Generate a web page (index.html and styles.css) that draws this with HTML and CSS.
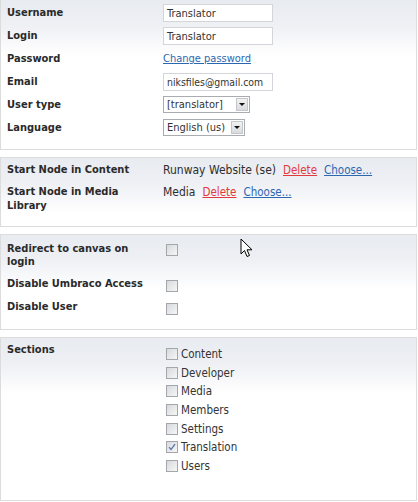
FILE: index.html
```html
<!DOCTYPE html>
<html>
<head>
<meta charset="utf-8">
<link rel="stylesheet" href="styles.css">
</head>
<body>
<div class="page">
  <section class="panel first">
    <div class="row"><div class="label">Username</div><div class="value"><span class="field w110">Translator</span></div></div>
    <div class="row"><div class="label">Login</div><div class="value"><span class="field w110">Translator</span></div></div>
    <div class="row"><div class="label">Password</div><div class="value"><a class="link blue">Change password</a></div></div>
    <div class="row"><div class="label">Email</div><div class="value"><span class="field w110 small">niksfiles@gmail.com</span></div></div>
    <div class="row"><div class="label">User type</div><div class="value"><span class="select w87"><span>[translator]</span><span class="arrow"></span></span></div></div>
    <div class="row"><div class="label">Language</div><div class="value"><span class="select w82"><span>English (us)</span><span class="arrow"></span></span></div></div>
  </section>

  <section class="panel p2">
    <div class="row"><div class="label">Start Node in Content</div><div class="value"><span class="node">Runway Website (se)</span><a class="link red">Delete</a><a class="link blue">Choose...</a></div></div>
    <div class="row"><div class="label">Start Node in Media<br>Library</div><div class="value"><span class="node">Media</span><a class="link red">Delete</a><a class="link blue">Choose...</a></div></div>
  </section>

  <section class="panel p3">
    <div class="row r1"><div class="label">Redirect to canvas on<br>login</div><div class="value"><span class="cb"></span></div></div>
    <div class="row"><div class="label">Disable Umbraco Access</div><div class="value"><span class="cb"></span></div></div>
    <div class="row"><div class="label">Disable User</div><div class="value"><span class="cb"></span></div></div>
  </section>

  <section class="panel p4">
    <div class="row"><div class="label">Sections</div>
      <ul class="checks">
        <li><span class="cb"></span>Content</li>
        <li><span class="cb"></span>Developer</li>
        <li><span class="cb"></span>Media</li>
        <li><span class="cb"></span>Members</li>
        <li><span class="cb"></span>Settings</li>
        <li><span class="cb on"><svg viewBox="0 0 12 12" width="10" height="10"><path d="M2.5 6.2 L4.8 9 L9.6 2.6" fill="none" stroke="#4a6fa8" stroke-width="1.4"/></svg></span>Translation</li>
        <li><span class="cb"></span>Users</li>
      </ul>
    </div>
  </section>

  <svg class="cursor" width="14" height="21" viewBox="0 0 14 21"><path d="M1 1 L1 16 L4.5 12.5 L7 18.5 L9.5 17.5 L7 11.8 L12 11.8 Z" fill="#fff" stroke="#000" stroke-width="1" stroke-linejoin="miter"/></svg>
</div>
</body>
</html>
```

FILE: styles.css
```css
body {
  margin: 0;
  background: #fff;
  font-family: "DejaVu Sans Condensed", "DejaVu Sans", sans-serif;
  font-stretch: condensed;
  font-size: 11px;
  color: #333;
}
.page {
  position: relative;
  width: 417px;
  height: 502px;
}
.panel {
  border: 1px solid #dcdcdc;
  background: linear-gradient(#e8ebf0 0, #eef0f4 25px, #fff 55px);
  margin-bottom: 7px;
}
.panel.first {
  border-top: none;
  padding: 2px 0 9px;
}
.panel.p2 { padding: 1px 0 9px; }
.panel.p3 { padding: 3px 0 10px; }
.panel.p4 {
  padding: 1px 0 0;
  height: 164px;
  box-sizing: border-box;
  margin-bottom: 0;
}
.row {
  display: flex;
  line-height: 14px;
  padding: 4px 0 5px;
}
.p2 .row { padding: 4px 0 4px; }
.p3 .r1 { line-height: 13px; }
.label {
  flex: none;
  width: 162px;
  padding-left: 6px;
  box-sizing: border-box;
  font-weight: bold;
  color: #2a2a2a;
}
.value {
  display: flex;
  align-items: flex-start;
  gap: 7px;
  white-space: nowrap;
}
.node {
  font-size: 12px;
  color: #2e2e2e;
}
.p2 .link { font-size: 11.5px; }
.field {
  display: block;
  box-sizing: border-box;
  height: 18px;
  margin: -2px 0;
  padding: 1px 3px 0;
  line-height: 15px;
  border: 1px solid #d2d5da;
  background: #fff;
}
.field.small { font-size: 10.4px; }
.w110 { width: 110px; }
.select {
  display: flex;
  align-items: center;
  justify-content: space-between;
  box-sizing: border-box;
  height: 17px;
  margin: -2px 0 -1px;
  padding: 0 1px 0 3px;
  border: 1px solid #a9adb2;
  background: #fff;
}
.w87 { width: 87px; }
.w82 { width: 82px; }
.arrow {
  position: relative;
  width: 12px;
  height: 13px;
  box-sizing: border-box;
  border: 1px solid #c4c6c9;
  background: linear-gradient(#f2f2f2, #d9dbde);
}
.arrow::after {
  content: "";
  position: absolute;
  left: 2px;
  top: 4px;
  border-left: 3px solid transparent;
  border-right: 3px solid transparent;
  border-top: 3px solid #111;
}
.link {
  text-decoration: underline;
  cursor: pointer;
}
.blue { color: #2c67b1; }
.red { color: #e03a3e; }
.cb {
  display: inline-flex;
  align-items: center;
  justify-content: center;
  flex: none;
  box-sizing: border-box;
  width: 12px;
  height: 12px;
  margin: 3px 0 -1px 3px;
  border: 1px solid #a3a7ac;
  background: linear-gradient(135deg, #d7d9dc, #f6f6f6);
}
.p3 .r1 .cb { margin-top: 2px; }
.checks {
  list-style: none;
  margin: 2px 0 0;
  padding: 0;
  font-size: 11.5px;
}
.checks li {
  display: flex;
  align-items: center;
  height: 18.6px;
}
.checks .cb {
  margin: 0 3px 0 3px;
}
.cursor {
  position: absolute;
  left: 240px;
  top: 238px;
}
```
